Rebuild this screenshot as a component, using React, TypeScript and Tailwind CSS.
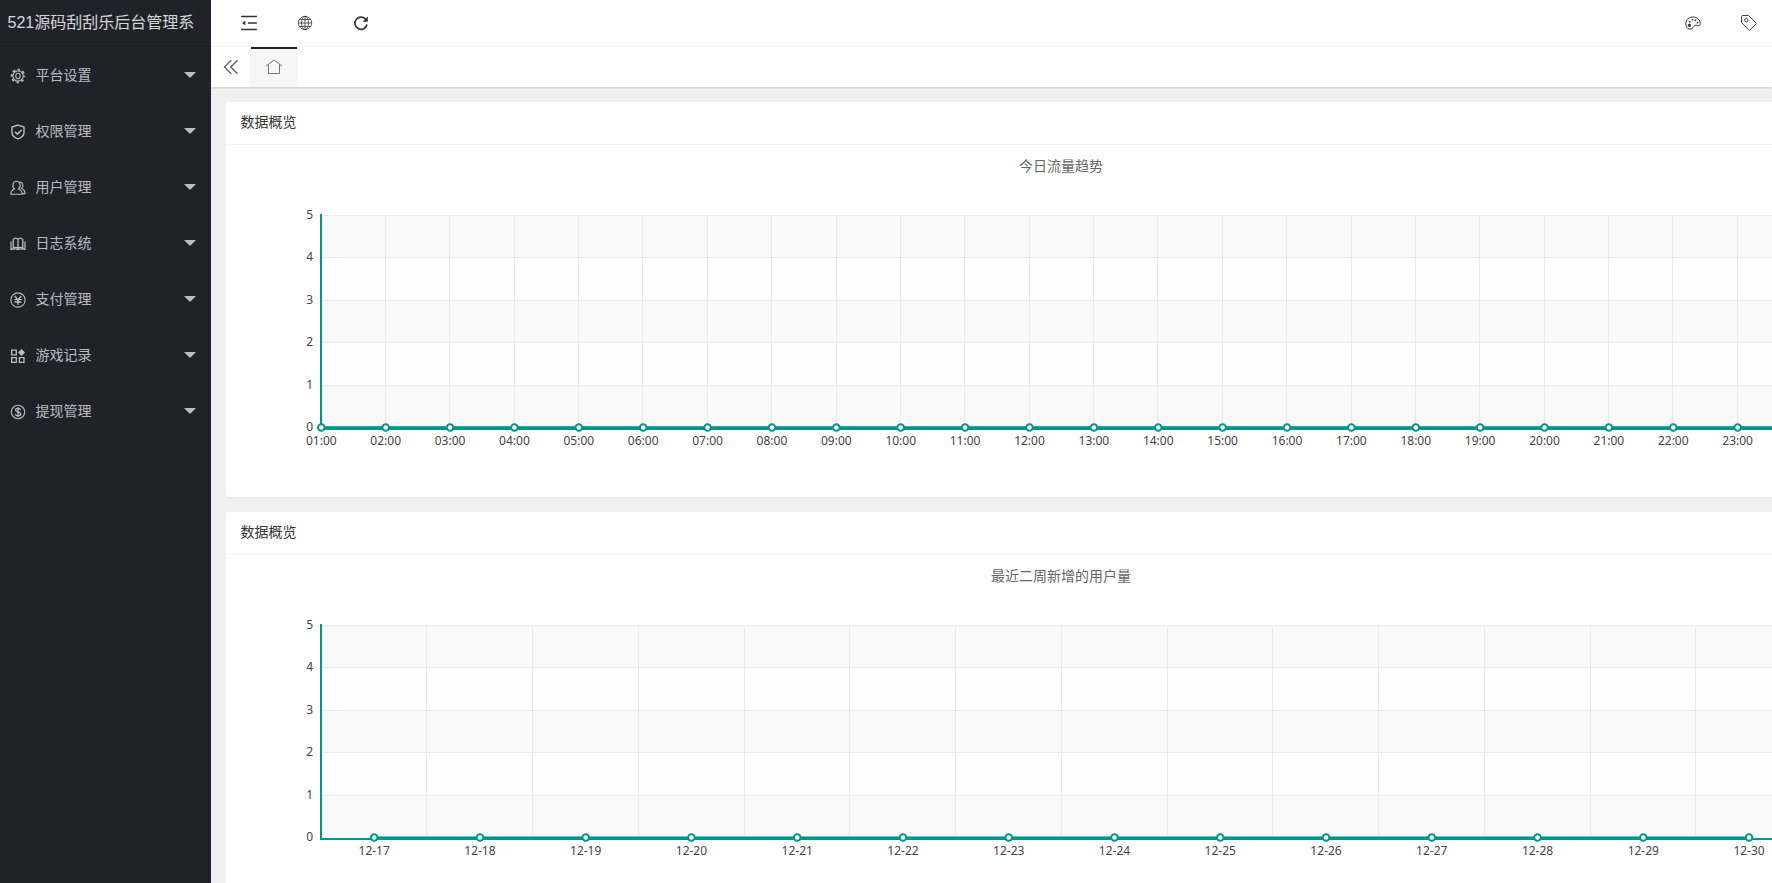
import { ReactNode } from "react";

type MenuItem = { title: string; icon: ReactNode };

type ChartProps = {
  title: string;
  labels: string[];
  points: number;
  step: number;
  boundaryGap?: boolean;
  stroke: string;
};

const menus: MenuItem[] = [
  {
    title: "平台设置",
    icon: (
      <>
        <circle cx="8" cy="8" r="5.2" strokeWidth="1.2" />
        <circle cx="8" cy="8" r="6.5" strokeWidth="1.6" strokeDasharray="2.5 2.605" strokeDashoffset="1.25" />
        <ellipse cx="8" cy="8" rx="2.2" ry="2.8" />
      </>
    ),
  },
  {
    title: "权限管理",
    icon: (
      <>
        <path d="M8 1.1 14 3v5.5c0 2.9-2.6 5.2-6 6.4-3.400-1.200-6-3.500-6-6.400V3z" strokeWidth="1.4" />
        <path d="m5 7.700 2.400 2.400L11.600 6" strokeWidth="1.5" />
      </>
    ),
  },
  {
    title: "用户管理",
    icon: (
      <>
        <path d="M4.500 9C2.900 7.500 2.700 5.300 3.200 3.800 3.700 2 5 1.200 6.500 1.200s2.900.8 3.400 2.600c.5 1.500.2 3.700-1.400 5.200 2.300.8 3.700 2.200 3.900 5.300H.8C1 11.200 2.200 9.800 4.500 9z" />
        <path d="M9.800 2c3.700.4 4 4.600 1.700 6.600 2.400.9 3.500 2.600 3.500 5h-2" />
      </>
    ),
  },
  {
    title: "日志系统",
    icon: (
      <>
        <path
          d="M3.200 12V3.500C4.500 1.600 6.800 1.800 8 3.500c1.200-1.700 3.500-1.900 4.800 0V12c-1.500-.9-3.300-.9-4.800.3-1.500-1.200-3.300-1.200-4.800-.3zM8 3.500v8.800"
          strokeWidth="1.3"
        />
        <path d="M1 5.500V14M15 5.500V14M1 13.500c2-.7 4.500-.8 6.200-.2h1.600c1.800-.6 4.200-.5 6.200.2" strokeWidth="1.2" />
      </>
    ),
  },
  {
    title: "支付管理",
    icon: (
      <>
        <circle cx="8" cy="8" r="7.1" />
        <path d="m4.800 4 3.200 4 3.200-4M8 8v4.800M4.500 7.600h7M4.500 10h7" strokeWidth="1.4" />
      </>
    ),
  },
  {
    title: "游戏记录",
    icon: (
      <>
        <path d="M1.700 2.200h4.600v4.600H1.700zM1.700 9.700h4.600v4.600H1.700zM9.400 9.700H14v4.600H9.400z" strokeWidth="1.3" />
        <path d="m11.500 1 3.500 3.500L11.500 8 8 4.500z" fill="currentColor" strokeWidth="0" />
      </>
    ),
  },
  {
    title: "提现管理",
    icon: (
      <>
        <circle cx="8" cy="8" r="6.7" />
        <path
          d="M10.600 5.700C10.300 4.700 9.300 4.300 8 4.300c-1.400 0-2.500.6-2.500 1.800 0 2.500 5.200 1.300 5.200 3.900 0 1.200-1.200 1.800-2.600 1.800-1.500 0-2.500-.6-2.800-1.700M8 3v10"
          strokeWidth="1.3"
        />
      </>
    ),
  },
];

const hours = Array.from({ length: 23 }, (_, i) => `${String(i + 1).padStart(2, "0")}:00`);
const days = Array.from({ length: 14 }, (_, i) => `12-${i + 17}`);
const rows = [70, 112, 155, 197, 240, 283];

const Icon = ({ children, size = 16 }: { children: ReactNode; size?: number }) => (
  <svg width={size} height={size} viewBox="0 0 16 16" fill="none" stroke="currentColor" strokeWidth="1.1">
    {children}
  </svg>
);

const Sidebar = () => (
  <aside className="w-[211px] shrink-0 bg-[#20222a] text-white/70">
    <div className="h-[47px] pl-[7.5px] pt-2 leading-[30px] text-base whitespace-nowrap overflow-hidden border-b border-[#1b1d24] text-white/80">
      521源码刮刮乐后台管理系
    </div>
    <ul>
      {menus.map((item) => (
        <li key={item.title} className="h-14 flex items-center pl-2.5 pr-[15px]">
          <span className="mt-0.5">
            <Icon>{item.icon}</Icon>
          </span>
          <span className="ml-[9.5px] flex-1 text-sm pb-px">{item.title}</span>
          <svg width="12" height="6" viewBox="0 0 12 6" fill="currentColor">
            <path d="M0 0h12L6 6z" />
          </svg>
        </li>
      ))}
    </ul>
  </aside>
);

const TopBar = () => (
  <header className="h-[47px] flex items-center bg-white border-b border-[#f6f6f6] text-[#333] pl-[29px] pr-[15px]">
    <Icon size={18}>
      <path d="M1 2.200h14M7 8h8M1 13.800h14" strokeWidth="1.300" />
      <path d="M1.800 8 4.800 5.900v4.200z" fill="currentColor" strokeWidth="0" />
    </Icon>
    <span className="ml-[39px]">
      <Icon>
        <g strokeWidth="0.800">
          <circle cx="8" cy="8" r="6.700" />
          <ellipse cx="8" cy="8" rx="3.500" ry="6.700" />
          <path d="M8 1.300v13.400M1.300 8h13.400M2.300 4.500h11.400M2.300 11.500h11.400" />
        </g>
      </Icon>
    </span>
    <span className="ml-[40px]">
      <Icon>
        <path d="M13 4.600A6.100 6.100 0 1 0 14 9.500" strokeWidth="1.700" />
        <path d="M14.800 1.500v5.300H9.500z" fill="currentColor" strokeWidth="0" />
      </Icon>
    </span>
    <span className="ml-auto">
      <Icon>
        <path
          d="M4.800 14.200C2 14 .8 11.300.8 8.500.8 4.500 4 2 8 2c4.200 0 7.200 2.900 7.200 6.500 0 1.600-.5 2.300-1.500 2.300-1.600 0-2.200-1.100-3.500-.5-1.900.8-2.200 4-5.400 3.900z"
          strokeWidth="1"
        />
        <g fill="currentColor" strokeWidth="0">
          <circle cx="4.400" cy="10.300" r="1.600" />
          <circle cx="4.700" cy="6.700" r=".9" />
          <circle cx="7.500" cy="4.700" r=".9" />
          <circle cx="10.500" cy="5.200" r=".9" />
          <circle cx="12.500" cy="7.700" r=".9" />
        </g>
      </Icon>
    </span>
    <span className="ml-10">
      <Icon>
        <g strokeWidth="0.900">
          <path d="M.5 1.300 1.200.5H7.500l8 8-6.900 7L.5 7.500z" />
          <circle cx="5.300" cy="5.200" r="1.700" />
        </g>
      </Icon>
    </span>
  </header>
);

const TabBar = () => (
  <div className="relative h-10 flex bg-white shadow-[0_1px_2px_rgba(0,0,0,0.15)]">
    <div className="w-[39px] flex items-center justify-center text-[#666]">
      <Icon>
        <path d="M8.200 1.200 1.500 8l6.700 6.800M14.500 1.200 7.800 8l6.700 6.800" strokeWidth="1.400" />
      </Icon>
    </div>
    <div className="w-12 bg-[#f6f6f6] px-px text-[#666]">
      <div className="h-0.5 bg-[#20222a]" />
      <div className="h-9 flex items-center justify-center">
        <Icon>
          <path d="M0 7 8 1l8 6M2.500 5.500v9h11v-9" strokeWidth="0.900" />
        </Icon>
      </div>
    </div>
  </div>
);

const Chart = ({ title, labels, points, step, boundaryGap, stroke }: ChartProps) => {
  const left = 95;
  const width = 1480.7;
  const pointX = (i: number) => left + step * (boundaryGap ? i + 0.5 : i);
  const lineWidth = pointX(points - 1) - pointX(0);

  return (
    <svg className="block w-full h-[352px]">
      <text x="835" y="26" textAnchor="middle" fontSize="14" fill="#666">
        {title}
      </text>
      {rows.slice(0, 5).map((y, i) => (
        <rect
          key={y}
          x={left}
          y={y}
          width={width}
          height={rows[i + 1] - y}
          fill={i % 2 === 0 ? "#f9f9f9" : "#fefefe"}
        />
      ))}
      {rows.map((y) => (
        <rect key={y} x={left} y={y} width={width} height="1" fill="#ebebeb" />
      ))}
      {labels.map((label, i) => (
        <rect key={label} x={Math.floor(left + step * i)} y="70" width="1" height="213" fill="#e8e8e8" />
      ))}
      <rect x="94" y="69" width="2" height="216" fill="#009688" />
      <rect x="94" y="283" width={width} height="2" fill="#009688" />
      <rect x={pointX(0)} y="281" width={lineWidth} height="1" fill={stroke} />
      <rect x={pointX(0)} y="282" width={lineWidth} height="3" fill="#009688" />
      <g fontSize="12" fill="#444" fontFamily="'Noto Sans', sans-serif">
        {rows.map((y, i) => (
          <text key={y} x="87" y={i === 5 ? 286 : y + 4} textAnchor="end">
            {5 - i}
          </text>
        ))}
        {labels.map((label, i) => (
          <g key={label}>
            <circle cx={pointX(i) + 0.3} cy="282.5" r="3.3" fill="#fff" stroke="#009688" strokeWidth="2" />
            <text x={pointX(i) + 0.3} y="300" textAnchor="middle">
              {label}
            </text>
          </g>
        ))}
      </g>
    </svg>
  );
};

const Card = ({ children }: { children: ReactNode }) => (
  <section className="shrink-0 h-[395px] bg-white rounded-l-[2px] shadow-[0_1px_2px_rgba(0,0,0,0.05)]">
    <div className="h-[43px] leading-[41px] pl-[14.5px] border-b border-[#f6f6f6] text-sm text-[#333]">
      数据概览
    </div>
    {children}
  </section>
);

const App = () => {
  return (
    <div className="h-screen flex overflow-hidden bg-[#f0f0f0] font-['Liberation_Sans','Noto_Sans_CJK_SC',sans-serif]">
      <Sidebar />
      <div className="flex-1 min-w-0 flex flex-col">
        <TopBar />
        <TabBar />
        <main className="flex-1 min-h-0 overflow-hidden flex flex-col gap-[15px] pt-[15px] pl-[15px]">
          <Card>
            <Chart title="今日流量趋势" labels={hours} points={24} step={64.38} stroke="#2aa3b3" />
          </Card>
          <Card>
            <Chart title="最近二周新增的用户量" labels={days} points={14} step={105.76} boundaryGap stroke="#6fc0b6" />
          </Card>
        </main>
      </div>
    </div>
  );
};

export default App;
